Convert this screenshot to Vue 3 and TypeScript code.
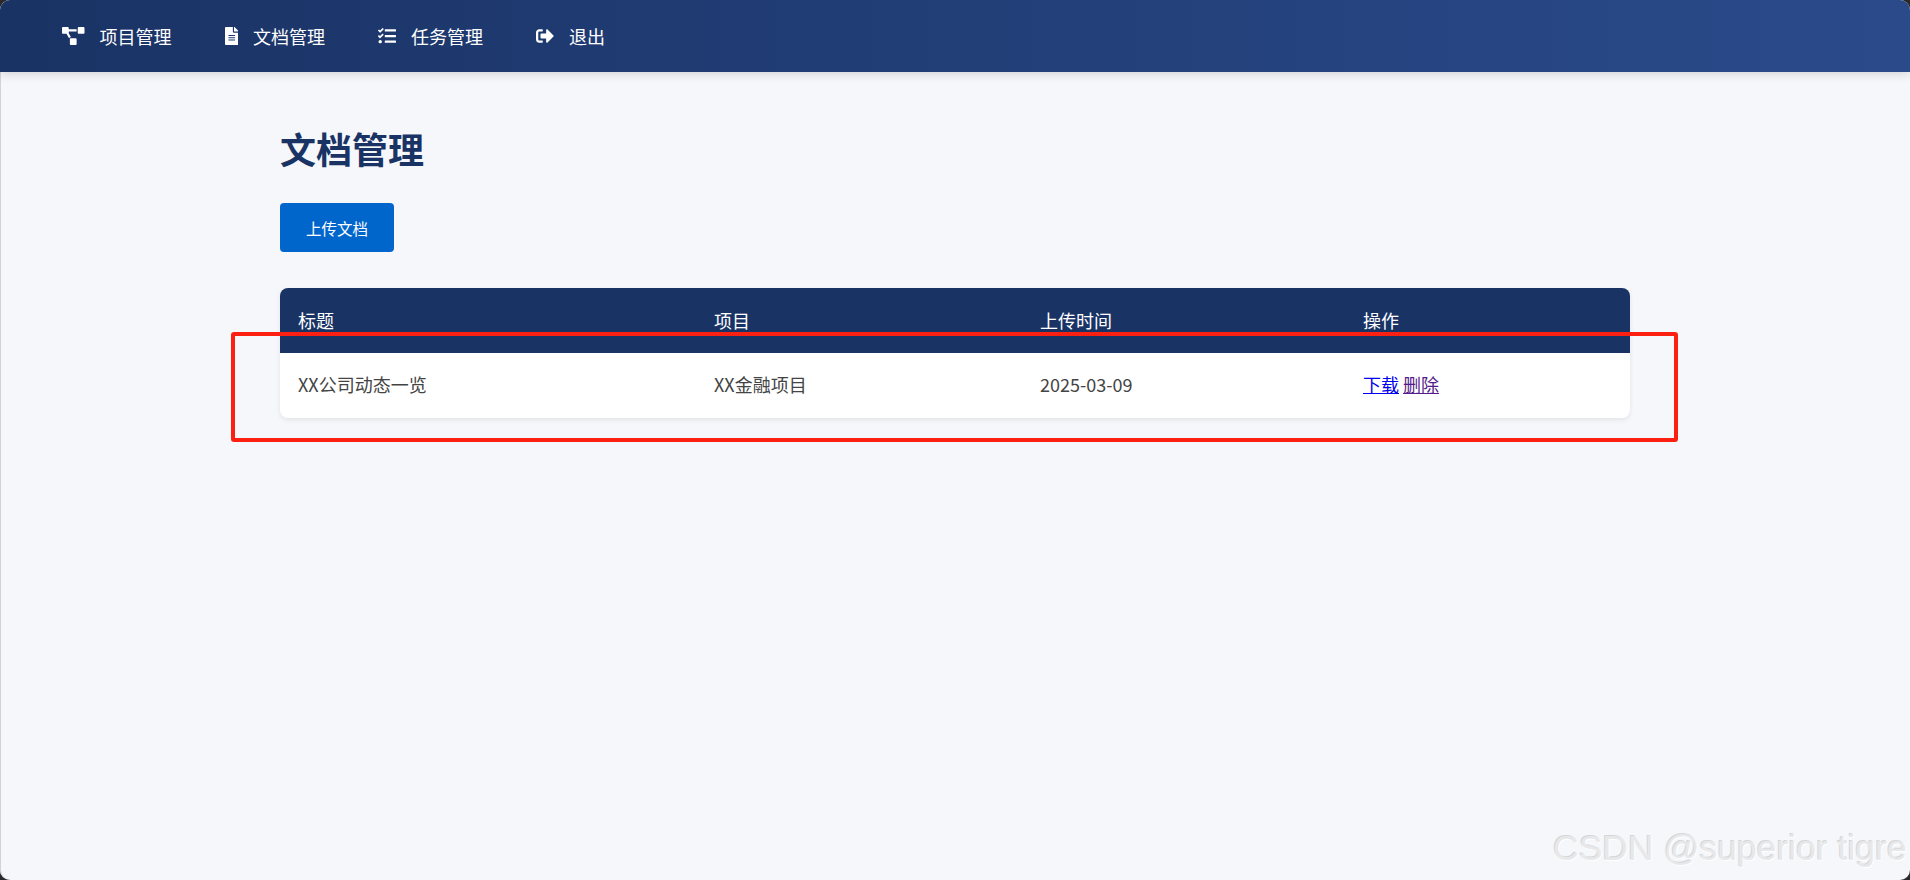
<template>
  <div class="window">
    <nav class="top-nav">
      <a v-for="item in navItems" :key="item.label" class="nav-item" href="#">
        <svg class="nav-icon" :viewBox="item.box" :class="item.cls"><path :d="item.d" fill="currentColor" /></svg>
        <span>{{ item.label }}</span>
      </a>
    </nav>

    <main class="content">
      <h1>文档管理</h1>
      <button class="upload-btn">上传文档</button>
      <table class="doc-table">
        <thead>
          <tr>
            <th class="col-title">标题</th>
            <th class="col-project">项目</th>
            <th class="col-time">上传时间</th>
            <th>操作</th>
          </tr>
        </thead>
        <tbody>
          <tr v-for="doc in docs" :key="doc.title">
            <td>{{ doc.title }}</td>
            <td>{{ doc.project }}</td>
            <td>{{ doc.time }}</td>
            <td>
              <a class="link" href="#">下载</a>{{ ' ' }}<a class="link visited" href="#">删除</a>
            </td>
          </tr>
        </tbody>
      </table>
    </main>

    <div class="red-box"></div>
    <div class="watermark">CSDN @superior tigre</div>
  </div>
</template>

<script setup lang="ts">
const navItems = [
  {
    label: '项目管理',
    box: '0 0 640 512',
    cls: 'w-diagram',
    d: 'M384 320H256c-17.67 0-32 14.33-32 32v128c0 17.67 14.33 32 32 32h128c17.67 0 32-14.33 32-32V352c0-17.67-14.33-32-32-32zM192 32c0-17.67-14.33-32-32-32H32C14.33 0 0 14.33 0 32v128c0 17.67 14.33 32 32 32h95.72l73.16 128.04C211.98 300.98 232.4 288 256 288h.28L192 175.51V128h224V64H192V32zM608 0H480c-17.67 0-32 14.33-32 32v128c0 17.67 14.33 32 32 32h128c17.67 0 32-14.33 32-32V32c0-17.67-14.33-32-32-32z'
  },
  {
    label: '文档管理',
    box: '0 0 384 512',
    cls: 'w-file',
    d: 'M224 136V0H24C10.7 0 0 10.7 0 24v464c0 13.3 10.7 24 24 24h336c13.3 0 24-10.7 24-24V160H248c-13.2 0-24-10.8-24-24zm64 236c0 6.6-5.4 12-12 12H108c-6.6 0-12-5.4-12-12v-8c0-6.6 5.4-12 12-12h168c6.6 0 12 5.4 12 12v8zm0-64c0 6.6-5.4 12-12 12H108c-6.6 0-12-5.4-12-12v-8c0-6.6 5.4-12 12-12h168c6.6 0 12 5.4 12 12v8zm0-72v8c0 6.6-5.4 12-12 12H108c-6.6 0-12-5.4-12-12v-8c0-6.6 5.4-12 12-12h168c6.6 0 12 5.4 12 12zm96-114.1v6.1H256V0h6.1c6.4 0 12.5 2.5 17 7l97.9 98c4.5 4.5 7 10.6 7 16.9z'
  },
  {
    label: '任务管理',
    box: '0 0 512 512',
    cls: 'w-square',
    d: 'M139.61 35.5a12 12 0 0 0-17 0L58.93 98.81l-22.7-22.12a12 12 0 0 0-17 0L3.53 92.41a12 12 0 0 0 0 17l47.59 47.4a12.78 12.78 0 0 0 17.61 0l15.59-15.62L156.52 69a12.09 12.09 0 0 0 .09-17zm0 159.19a12 12 0 0 0-17 0l-63.68 63.72-22.7-22.1a12 12 0 0 0-17 0L3.53 252a12 12 0 0 0 0 17L51 316.5a12.77 12.77 0 0 0 17.6 0l15.7-15.69 72.2-72.22a12 12 0 0 0 .09-16.9zM64 368c-26.49 0-48.59 21.5-48.59 48S37.53 464 64 464a48 48 0 0 0 0-96zm432 16H208a16 16 0 0 0-16 16v32a16 16 0 0 0 16 16h288a16 16 0 0 0 16-16v-32a16 16 0 0 0-16-16zm0-320H208a16 16 0 0 0-16 16v32a16 16 0 0 0 16 16h288a16 16 0 0 0 16-16V80a16 16 0 0 0-16-16zm0 160H208a16 16 0 0 0-16 16v32a16 16 0 0 0 16 16h288a16 16 0 0 0 16-16v-32a16 16 0 0 0-16-16z'
  },
  {
    label: '退出',
    box: '0 0 512 512',
    cls: 'w-square',
    d: 'M497 273L329 441c-15 15-41 4.5-41-17v-96H152c-13.3 0-24-10.7-24-24v-96c0-13.3 10.7-24 24-24h136V88c0-21.4 25.9-32 41-17l168 168c9.3 9.4 9.3 24.6 0 34zM192 436v-40c0-6.6-5.4-12-12-12H96c-17.7 0-32-14.3-32-32V160c0-17.7 14.3-32 32-32h84c6.6 0 12-5.4 12-12V76c0-6.6-5.4-12-12-12H96c-53 0-96 43-96 96v192c0 53 43 96 96 96h84c6.6 0 12-5.4 12-12z'
  }
]

const docs = [
  { title: 'XX公司动态一览', project: 'XX金融项目', time: '2025-03-09' }
]
</script>

<style>
html, body {
  margin: 0;
  background: #2a2a2a;
}
</style>

<style scoped>
.window {
  position: relative;
  height: 880px;
  overflow: hidden;
  background: #f5f7fb;
  border-radius: 10px;
  box-shadow: inset 1px 0 0 #cfd3da;
  font-family: "Noto Sans CJK SC", "Noto Sans", sans-serif;
  font-size: 18px;
  color: #444;
}

.top-nav {
  display: flex;
  align-items: center;
  gap: 53px;
  height: 72px;
  padding-left: 62px;
  background: linear-gradient(90deg, #1a3365, #2a4a8a);
  box-shadow: 0 2px 10px rgba(0, 0, 0, 0.15);
}

.nav-item {
  display: flex;
  align-items: center;
  gap: 15px;
  color: #fff;
  text-decoration: none;
  line-height: 29px;
}

.nav-icon {
  height: 18px;
  flex: none;
}

.w-diagram {
  width: 22.5px;
}

.w-file {
  width: 13.5px;
}

.w-square {
  width: 18px;
}

.content {
  width: 1350px;
  margin: 0 auto;
  padding-top: 51px;
}

h1 {
  margin: 0 0 30px;
  font-size: 36px;
  font-weight: 700;
  line-height: 50px;
  color: #1a3365;
}

.upload-btn {
  display: block;
  width: 114px;
  height: 49px;
  padding: 0;
  border: none;
  border-radius: 4px;
  background: #0066cc;
  color: #fff;
  font-family: inherit;
  font-size: 15.5px;
}

.doc-table {
  width: 100%;
  margin-top: 36px;
  table-layout: fixed;
  border-collapse: separate;
  border-spacing: 0;
  border-radius: 8px;
  background: #fff;
  box-shadow: 0 2px 5px rgba(0, 0, 0, 0.08);
  overflow: hidden;
}

th, td {
  height: 65px;
  padding: 0 18px;
  box-sizing: border-box;
  text-align: left;
  font-weight: 400;
}

th {
  padding-bottom: 2px;
  background: #1a3365;
  color: #fff;
}

td {
  padding-bottom: 3px;
}

.col-title {
  width: 416px;
}

.col-project {
  width: 326px;
}

.col-time {
  width: 323px;
}

.link {
  color: #0000ee;
}

.link.visited {
  color: #551a8b;
}

.red-box {
  position: absolute;
  left: 231px;
  top: 332px;
  width: 1447px;
  height: 110px;
  box-sizing: border-box;
  border: 4px solid #fb2012;
  border-radius: 3px;
}

.watermark {
  position: absolute;
  left: 1553px;
  top: 826px;
  font-family: "Liberation Sans", sans-serif;
  font-size: 35.5px;
  line-height: 44px;
  white-space: nowrap;
  color: #e8e8ea;
  text-shadow: 1px 1px 1px #fff, -1px -1px 0 #d6d6d8;
}
</style>
